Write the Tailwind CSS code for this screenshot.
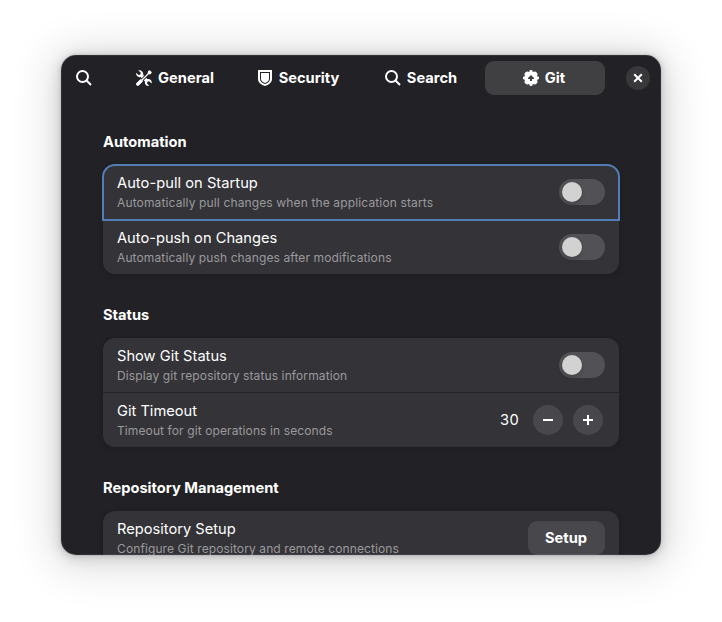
<!DOCTYPE html>
<html lang="en">
<head>
<meta charset="utf-8">
<title>Preferences</title>
<script src="https://cdn.jsdelivr.net/npm/@tailwindcss/browser@4"></script>
</head>
<body class="h-[622px] overflow-hidden bg-white pt-[55px] pl-[61px] font-[Inter,sans-serif] text-[14.67px] text-white">
<main class="relative h-[500px] w-[600px] rounded-[15px] shadow-[0_0_0_1px_rgba(0,0,0,0.05),0_1px_5px_1px_rgba(0,0,0,0.09),0_2px_14px_3px_rgba(0,0,0,0.1),0_4px_44px_8px_rgba(0,0,0,0.14)]">
<div class="h-full overflow-hidden rounded-[15px] bg-[#222226]">
  <header class="flex h-[46px] items-center pl-[6px] pr-[11px] font-bold">
    <button class="flex h-[34px] w-[34px] items-center justify-center">
      <svg class="h-4 w-4" viewBox="0 0 16 16" fill="none" stroke="currentColor" stroke-width="2"><circle cx="6.500" cy="6.500" r="5.500"/><path d="M10.300 10.300l4.700 4.700"/></svg>
    </button>
    <nav class="ml-[15px] flex gap-[3px]">
      <button class="flex h-[34px] w-[120px] items-center justify-center gap-[6px] pr-[2px]">
        <svg class="h-4 w-4" viewBox="0 0 16 16" fill="currentColor"><path d="M2.200 .300L4.800 2.800 4.400 4.500 2.500 5 .200 2.800C-.300 5.600 1.800 7.700 4.600 7.100L6.500 9 9 6.900 7.200 5.100C7.900 2.200 5.200-.600 2.200 .300Z"/><path d="M7.500 10.100L9 11.500C8.400 14.200 10.600 16.500 13.200 15.800L11 13.500 11.400 11.700 13.200 11.200 15.600 13.500C16.400 10.800 14.200 8.500 11.400 9.100L10 7.700Z"/><path d="M5.200 8.600L.700 13C-.700 14.500 1.400 16.700 2.900 15.300L7.300 10.800Z"/><path class="stroke-[#222226]" stroke-width="3" d="M5 11L11.500 4.500"/><path d="M4.900 8.900L.700 13C-.700 14.500 1.400 16.700 2.900 15.300L7.100 11.100Z"/><path stroke="currentColor" stroke-width="1.300" d="M5.500 10.500L13 3"/><path d="M13.800 .200L15.800 2.200 15 3.900 13 4.400 11.600 3 12.100 1Z"/></svg>
        <span>General</span>
      </button>
      <button class="flex h-[34px] w-[120px] items-center justify-center gap-[6px] pr-[2px]">
        <svg class="h-4 w-4" viewBox="0 0 16 16" fill="currentColor"><path fill-rule="evenodd" d="M1 0H15V9C15 12.500 11.500 15 8 16 4.500 15 1 12.500 1 9ZM3 2V9C3 11.600 5.400 13.200 8 14 10.600 13.200 13 11.600 13 9V2Z"/><path d="M4 3H12V9C12 11 10.200 12.200 8 13 5.800 12.200 4 11 4 9Z"/></svg>
        <span>Security</span>
      </button>
      <button class="flex h-[34px] w-[120px] items-center justify-center gap-[6px] pr-[2px]">
        <svg class="h-4 w-4" viewBox="0 0 16 16" fill="none" stroke="currentColor" stroke-width="2"><circle cx="6.500" cy="6.500" r="5.500"/><path d="M10.300 10.300l4.700 4.700"/></svg>
        <span>Search</span>
      </button>
      <button class="flex h-[34px] w-[120px] items-center justify-center gap-[6px] rounded-[9px] bg-[#404042] pr-[2px]">
        <svg class="h-4 w-4" viewBox="0 0 16 16" fill="currentColor"><path fill-rule="evenodd" d="M7.500 0H8.500Q9.300 0 9.500 .900L9.800 2 11.700 1.500Q12.400 1.300 13 1.900L14.100 3Q14.700 3.600 14.500 4.300L14 6.200 15.200 6.500Q16 6.800 16 7.500V8.500Q16 9.200 15.200 9.500L14 9.800 14.500 11.700Q14.700 12.400 14.100 13L13 14.100Q12.400 14.700 11.700 14.500L9.800 14 9.500 15.100Q9.300 16 8.500 16H7.500Q6.700 16 6.500 15.100L6.200 14 4.300 14.500Q3.600 14.700 3 14.100L1.900 13Q1.300 12.400 1.500 11.700L2 9.800 .800 9.500Q0 9.200 0 8.500V7.500Q0 6.800 .800 6.500L2 6.200 1.500 4.300Q1.300 3.600 1.900 3L3 1.900Q3.600 1.300 4.300 1.500L6.200 2 6.500 .900Q6.700 0 7.500 0ZM8 5L5 8V9H7V11H9V9H11V8Z"/></svg>
        <span>Git</span>
      </button>
    </nav>
    <button class="ml-auto flex h-6 w-6 items-center justify-center rounded-full bg-[#38383b]">
      <svg class="h-4 w-4" viewBox="0 0 16 16" stroke="currentColor" stroke-width="2"><path d="M4.200 4.200L11.800 11.800M11.800 4.200L4.200 11.800"/></svg>
    </button>
  </header>

  <div class="px-[42px] pt-8">
    <section>
      <h2 class="h-[18px] font-bold leading-[18px]">Automation</h2>
      <div class="mt-[14px] rounded-xl bg-[#343338] shadow-[0_1px_3px_1px_rgba(0,0,0,0.08),0_2px_6px_2px_rgba(0,0,0,0.03)]">
        <div class="flex h-[55px] items-center justify-between rounded-t-xl px-[14px] pb-px outline-2 -outline-offset-1 outline-[#527db5]">
          <div><p class="leading-[18px] tracking-[0.04px]">Auto-pull on Startup</p><p class="mt-[3px] text-[12.03px] leading-[15px] tracking-[0.13px] text-[#9a9a9c]">Automatically pull changes when the application starts</p></div>
          <div class="h-[26px] w-[46px] rounded-full bg-[#525156] p-[3px]"><div class="h-5 w-5 rounded-full bg-[#d2d2d2] shadow-[0_2px_4px_rgba(0,0,0,0.2)]"></div></div>
        </div>
        <div class="flex h-[54px] items-center justify-between px-[14px]">
          <div><p class="leading-[18px]">Auto-push on Changes</p><p class="mt-[3px] text-[12.03px] leading-[15px] tracking-[0.11px] text-[#9a9a9c]">Automatically push changes after modifications</p></div>
          <div class="h-[26px] w-[46px] rounded-full bg-[#525156] p-[3px]"><div class="h-5 w-5 rounded-full bg-[#d2d2d2] shadow-[0_2px_4px_rgba(0,0,0,0.2)]"></div></div>
        </div>
      </div>
    </section>

    <section class="mt-8">
      <h2 class="h-[18px] font-bold leading-[18px]">Status</h2>
      <div class="mt-[14px] rounded-xl bg-[#343338] shadow-[0_1px_3px_1px_rgba(0,0,0,0.08),0_2px_6px_2px_rgba(0,0,0,0.03)]">
        <div class="flex h-[55px] items-center justify-between border-b border-[#232326] px-[14px]">
          <div><p class="leading-[18px]">Show Git Status</p><p class="mt-[3px] text-[12.03px] leading-[15px] tracking-[0.11px] text-[#9a9a9c]">Display git repository status information</p></div>
          <div class="h-[26px] w-[46px] rounded-full bg-[#525156] p-[3px]"><div class="h-5 w-5 rounded-full bg-[#d2d2d2] shadow-[0_2px_4px_rgba(0,0,0,0.2)]"></div></div>
        </div>
        <div class="flex h-[54px] items-center px-[14px]">
          <div class="flex-1"><p class="leading-[18px]">Git Timeout</p><p class="mt-[3px] text-[12.03px] leading-[15px] tracking-[0.1px] text-[#9a9a9c]">Timeout for git operations in seconds</p></div>
          <span class="tracking-[0.3px]">30</span>
          <button class="ml-[14px] flex h-[30px] w-[30px] items-center justify-center rounded-full bg-[#48474c]"><svg class="h-4 w-4" viewBox="0 0 16 16" fill="currentColor"><path d="M3 7h10v2H3z"/></svg></button>
          <button class="mr-[2px] ml-[10px] flex h-[30px] w-[30px] items-center justify-center rounded-full bg-[#48474c]"><svg class="h-4 w-4" viewBox="0 0 16 16" fill="currentColor"><path d="M7 3h2v4h4v2H9v4H7V9H3V7h4z"/></svg></button>
        </div>
      </div>
    </section>

    <section class="mt-8">
      <h2 class="h-[18px] font-bold leading-[18px]">Repository Management</h2>
      <div class="mt-[14px] rounded-xl bg-[#343338] shadow-[0_1px_3px_1px_rgba(0,0,0,0.08),0_2px_6px_2px_rgba(0,0,0,0.03)]">
        <div class="flex h-[54px] items-center justify-between px-[14px]">
          <div><p class="leading-[18px]">Repository Setup</p><p class="mt-[3px] text-[12.03px] leading-[15px] tracking-[0.1px] text-[#9a9a9c]">Configure Git repository and remote connections</p></div>
          <button class="h-[34px] w-[77px] rounded-[9px] bg-[#48474c] pr-px font-bold">Setup</button>
        </div>
      </div>
    </section>
  </div>
</div>
<div class="pointer-events-none absolute inset-0 rounded-[15px] inset-ring inset-ring-white/7"></div>
</main>
</body>
</html>
